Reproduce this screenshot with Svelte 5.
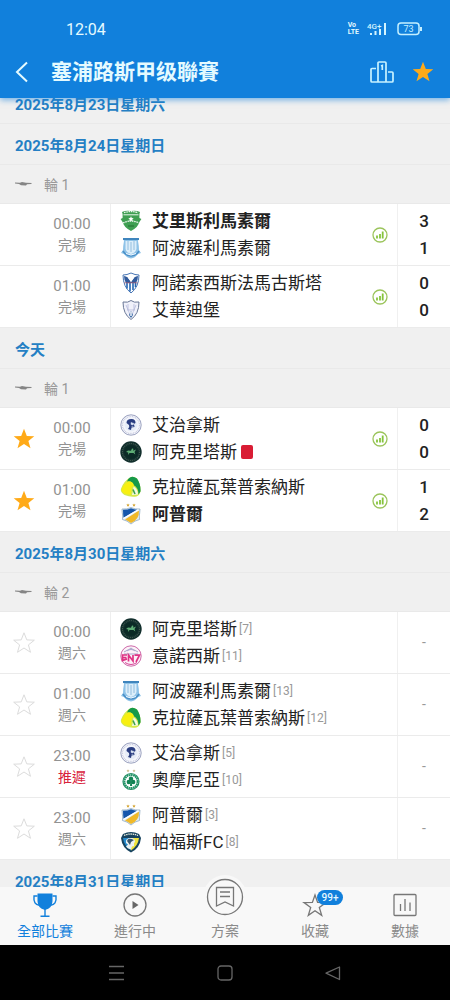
<script>
  const groups = [
    { date: '2025年8月23日星期六', matches: [] },
    {
      date: '2025年8月24日星期日',
      round: '輪 1',
      matches: [
        { time: '00:00', status: '完場', stats: true, teams: [
          { name: '艾里斯利馬素爾', crest: 'aris', score: '3', win: true },
          { name: '阿波羅利馬素爾', crest: 'apollon', score: '1' } ] },
        { time: '01:00', status: '完場', stats: true, teams: [
          { name: '阿諾索西斯法馬古斯塔', crest: 'anorthosis', score: '0' },
          { name: '艾華迪堡', crest: 'ethnikos', score: '0' } ] }
      ]
    },
    {
      date: '今天',
      round: '輪 1',
      matches: [
        { time: '00:00', status: '完場', stats: true, star: 'on', teams: [
          { name: '艾治拿斯', crest: 'achnas', score: '0' },
          { name: '阿克里塔斯', crest: 'akritas', score: '0', red: true } ] },
        { time: '01:00', status: '完場', stats: true, star: 'on', teams: [
          { name: '克拉薩瓦葉普索納斯', crest: 'krasava', score: '1' },
          { name: '阿普爾', crest: 'apoel', score: '2', win: true } ] }
      ]
    },
    {
      date: '2025年8月30日星期六',
      round: '輪 2',
      matches: [
        { time: '00:00', status: '週六', star: 'off', teams: [
          { name: '阿克里塔斯', crest: 'akritas', rank: 7 },
          { name: '意諾西斯', crest: 'enosis', rank: 11 } ] },
        { time: '01:00', status: '週六', star: 'off', teams: [
          { name: '阿波羅利馬素爾', crest: 'apollon', rank: 13 },
          { name: '克拉薩瓦葉普索納斯', crest: 'krasava', rank: 12 } ] },
        { time: '23:00', status: '推遲', late: true, star: 'off', teams: [
          { name: '艾治拿斯', crest: 'achnas', rank: 5 },
          { name: '奧摩尼亞', crest: 'omonia', rank: 10 } ] },
        { time: '23:00', status: '週六', star: 'off', teams: [
          { name: '阿普爾', crest: 'apoel', rank: 3 },
          { name: '帕福斯FC', crest: 'pafos', rank: 8 } ] }
      ]
    },
    { date: '2025年8月31日星期日', matches: [] }
  ];

  let list;
  $effect(() => {
    list.scrollTop = 15;
  });
</script>

{#snippet star(kind)}
  <svg class="star {kind}" viewBox="0 0 24 24" width="24" height="24" aria-hidden="true">
    <path d="M12 1.800l2.800 7.100 7.500.3-5.900 4.700 2.100 7.400-6.500-4.300-6.500 4.300 2.100-7.400L1.700 9.200l7.500-.3z" />
  </svg>
{/snippet}

{#snippet crest(id)}
  <svg class="crest" viewBox="0 0 22 22" width="22" height="22" aria-hidden="true">
    {#if id === 'aris'}
      <path d="M2 2q4-2 9-1 5-1 9 1l-.6 2v4l2 1-2 3q-1 5-8.400 9Q3.600 17 2.600 12l-2-3 2-1V4z" fill="#3f9f52" />
      <path d="M4 2.600q7-2 14 0M3 13q8-4 16 0" stroke="#e9f7eb" stroke-width="1.300" fill="none" stroke-dasharray="1.600 .7" />
      <path d="M3.500 4.800h15" stroke="#eaf7ec" stroke-width="1" />
      <path d="M11 6.300l.8 1.700 1.900.2-1.400 1.300.4 1.900-1.700-1-1.700 1 .4-1.900-1.400-1.300 1.900-.2z" fill="#fff" />
      <path d="M8 16h6" stroke="#2c7d3d" stroke-width="1.500" />
    {:else if id === 'apollon'}
      <path d="M3 1h16l-1 3q1 5 1 9l2 3-3 1q-3 4-7 4.500Q7 21 4 17l-3-1 2-3q0-4 1-9z" fill="#8fc3e8" />
      <path d="M3 1h16v2H3z" fill="#3f85bd" />
      <path d="M5.500 4h11v8q-1 4-5.500 5-4.500-1-5.500-5z" fill="#dceefa" />
      <path d="M8 4v9m6-9v9M11 5v10" stroke="#8bb8dc" stroke-width=".9" />
      <path d="M3 14q3 5 8 5t8-5" stroke="#4a90c8" stroke-width="1.500" fill="none" />
      <path d="M6 16.500q5 3 10 0" stroke="#f4faff" stroke-width="1" fill="none" />
    {:else if id === 'anorthosis'}
      <path d="M11 1q4 2 8 2 0 12-8 18Q3 15 3 3q4 0 8-2z" fill="#fff" stroke="#4775b4" stroke-width="1" />
      <path d="M4 4q4 0 7 6 3-6 7-6 0 4-2 7H6Q4 8 4 4z" fill="#315b9c" />
      <path d="M7 11v5.500M10 11v8.500M13 11v7M15.500 11v4" stroke="#2567b3" stroke-width="1.600" />
      <path d="M8 6q3-4 6 0l-3 4z" fill="#fff" />
      <path d="M4.500 10.800h13" stroke="#a45c72" stroke-width=".8" />
    {:else if id === 'ethnikos'}
      <path d="M11 1.500Q14 4 19 3q0 12-8 17.500Q3 15 3 3q5 1 8-1.500z" fill="#f0f1fa" stroke="#6a7897" stroke-width="1" />
      <path d="M6 6l5 12 5-12M8 5v6m6-6v6M7 11h8" stroke="#b4b9d9" stroke-width=".8" fill="none" />
      <path d="M9 16l2-4 2 4-2 3z" fill="#3969a5" />
      <path d="M10.300 13h1.400v4h-1.400z" fill="#fff" />
    {:else if id === 'achnas'}
      <circle cx="11" cy="11" r="10.200" fill="#f6f7fc" stroke="#8f96b8" stroke-width=".9" />
      <circle cx="11" cy="11" r="8.500" fill="none" stroke="#c6cadf" stroke-width="1.300" stroke-dasharray=".9 .8" />
      <circle cx="11" cy="11" r="6.500" fill="#e7edf8" />
      <path d="M6.500 9q0-4 5-4 4 0 4 4l-1.500 1 .5 3-3 .5-.5 2.500-3-1q2-2 1-4z" fill="#293c80" />
      <path d="M11 8.500l3 1-1 1.500-2-.5zM11.500 12.500h2" fill="#dbe4f4" stroke="#dbe4f4" stroke-width=".5" />
    {:else if id === 'akritas'}
      <circle cx="11" cy="11" r="10.700" fill="#122f2d" />
      <circle cx="11" cy="11" r="8.500" fill="none" stroke="#40594f" stroke-width="1.200" stroke-dasharray="1 .9" />
      <circle cx="11" cy="11" r="6.800" fill="#0b2a26" />
      <path d="M6 11l2-1.500 3 .3 1-2.300 1.300.2-.1 2 2.800-1.200-1.500 2.500.8 2.500-1.800-1.500H9.500L8 14l.3-2.500z" fill="#5fae76" />
    {:else if id === 'krasava'}
      <path d="M10 1.500Q13-.5 17 2.500q4 6 3.500 13-1 4-4 5-6 1-12-1.500-5-3-3.200-7Q4 5 10 1.500z" fill="#d6e94a" />
      <path d="M10 1.500Q13-.5 17 2.500q4 6 3.500 13l-2 3q0-7-5-9.500Q12 4 7 5.500q1-3 3-4z" fill="#16994a" />
      <path d="M8 5.500q-5 3-6.500 8.500.5 4 9 4.800l1-7.300 2.500-2Q13 5 8 5.500z" fill="#f8ef10" />
      <path d="M13.500 10.500q4 2 4.500 8l-6 .5 1-4z" fill="#f5fbe6" />
      <path d="M13 13.500l2 4.500" stroke="#3fa04c" stroke-width="1.600" />
    {:else if id === 'apoel'}
      <path d="M8 .4l.6 1 1.100.1-.8.8.2 1.100-1.100-.5-1.100.5.2-1.100-.8-.8 1.100-.1zM14 .4l.6 1 1.100.1-.8.8.2 1.100-1.100-.5-1.100.5.2-1.100-.8-.8 1.100-.1z" fill="#d7aa3e" />
      <path d="M2 6q5 .5 9-1.500 4 2 9 1.500-.2 4-.7 7l.3 3.500q-5 1-8.600 4.500-3.600-3.500-8.600-4.500L2.700 13Q2.200 10 2 6z" fill="#dfecf5" stroke="#86a4bc" stroke-width=".7" />
      <path d="M3 6.800q5 0 8-1.500 3 1.300 6 1.400l-13.500 8Q3 11 3 6.800z" fill="#1557ac" />
      <path d="M19 7.500q.5 9-8 12.500-4-3-6-3.500z" fill="#f0b929" />
      <path d="M3.500 15.500L18.500 6.800" stroke="#fff" stroke-width="1.300" />
    {:else if id === 'enosis'}
      <circle cx="11" cy="11" r="10.200" fill="#fcf1f8" stroke="#c75aa0" stroke-width=".9" />
      <path d="M4 7q7-5 14 0M7 6l4-3 4 3M4 9h14" stroke="#a9a5ca" stroke-width="1" fill="none" />
      <path d="M7 10H2.500v5.500L7 14M3 12.700h3.500M8.500 16.500V10l4.500 6V10m1.500.2h5L16 17" stroke="#df3284" stroke-width="1.700" fill="none" />
      <path d="M5 17.500q6 4 12 0" stroke="#d94898" stroke-width="1" fill="none" />
    {:else if id === 'omonia'}
      <path d="M8 .3l.5 1h1l-.7.8.2 1-1-.5-1 .5.200-1-.7-.8h1zM14 .3l.5 1h1l-.7.8.2 1-1-.5-1 .5.200-1-.7-.8h1z" fill="#cab98a" />
      <circle cx="11" cy="12.500" r="8" fill="#fff" stroke="#248e65" stroke-width="1.200" />
      <circle cx="11" cy="12.500" r="6.600" fill="none" stroke="#249568" stroke-width="2" stroke-dasharray="1.800 .4" />
      <g fill="#128253"><circle cx="11" cy="9.800" r="2.200" /><circle cx="8.800" cy="13" r="2.200" /><circle cx="13.200" cy="13" r="2.200" /><path d="M10.400 12h1.200l.6 5H10z" /></g>
    {:else}
      <path d="M3 3q8-4 16 0l2 4q-1 10-10 14.500Q2 17 1 7z" fill="#17435f" />
      <path d="M3 7q1 8 8 12.500V7z" fill="#248acd" />
      <path d="M11 7h8q-1 8-8 12.500z" fill="#eee33d" />
      <path d="M6 12q-1-5 5-5 4 0 4 4l-1 1v3l-2 .5-1 3q-4-1-5-3l2-2z" fill="#e9f1f1" />
      <path d="M7 10q1-4 7-1l-3 2-1 3z" fill="#38556a" />
      <path d="M4 4.500q7-3 14 0" stroke="#edf0df" stroke-width="1.300" fill="none" stroke-dasharray="1.500 .7" />
    {/if}
  </svg>
{/snippet}

<div class="screen">
  <header>
    <div class="status">
      <span class="clock">12:04</span>
      <div class="signals">
        <span class="volte">Vo<br />LTE</span>
        <svg viewBox="0 0 22 14" width="22" height="14" aria-label="4G+">
          <text x="0" y="7" class="tiny">4G+</text>
          <path d="M4 11v2M8.500 9v4M13 7v6M18 1v12" stroke="#d3f4ff" stroke-width="2" />
        </svg>
        <svg viewBox="0 0 26 14" width="26" height="14" aria-label="73">
          <rect x="1" y="1" width="21" height="11.500" rx="3" fill="none" stroke="#c4efff" stroke-width="1.500" />
          <path d="M24 5v4" stroke="#c4efff" stroke-width="2" />
          <text x="6.500" y="10" class="charge">73</text>
        </svg>
      </div>
    </div>
    <div class="titlebar">
      <button class="back" aria-label="返回">
        <svg viewBox="0 0 14 22" width="14" height="22"><path d="M12 1.500L2 11l10 9.500" fill="none" stroke="#e4faff" stroke-width="2" /></svg>
      </button>
      <h1>塞浦路斯甲级聯賽</h1>
      <button aria-label="排名">
        <svg viewBox="0 0 26 24" width="26" height="24" fill="none" stroke="#c8f2ff" stroke-width="1.700">
          <path d="M9 22V3q0-1 1-1h6q1 0 1 1v19M7 8.500H3q-1 0-1 1V21q0 1 1 1h20q1 0 1-1v-8q0-1-1-1h-4M12 6l1.300-.5V10" />
        </svg>
      </button>
      <button aria-label="收藏聯賽">{@render star('on')}</button>
    </div>
  </header>

  <main bind:this={list}>
    {#each groups as group}
      <section>
        <h2>{group.date}</h2>
        {#if group.round}
          <h3>
            <svg viewBox="0 0 17 6" width="17" height="6" aria-hidden="true"><path d="M0 1.500l5 .2 2-.7 4 .8 6 .2-1 1-4 .2-1 1.300-5-.2-2-1.400-4-.4z" fill="#858585" /></svg>
            {group.round}
          </h3>
        {/if}
        {#each group.matches as match}
          <article>
            {#if match.star}
              <button class="fav" aria-label="關注">{@render star(match.star)}</button>
            {:else}
              <span></span>
            {/if}
            <div class="when">
              <time>{match.time}</time>
              <span class:late={match.late}>{match.status}</span>
            </div>
            <div class="teams">
              {#each match.teams as team}
                <div class="team">
                  {@render crest(team.crest)}
                  <span class="name" class:win={team.win}>{team.name}</span>
                  {#if team.rank}<span class="rank">[{team.rank}]</span>{/if}
                  {#if team.red}<i class="red"></i>{/if}
                </div>
              {/each}
            </div>
            <div class="stats">
              {#if match.stats}
                <svg viewBox="0 0 16 16" width="16" height="16" aria-hidden="true">
                  <circle cx="8" cy="8" r="7" fill="none" stroke="#9bc45b" stroke-width="1.300" />
                  <path d="M5 8.500v3M8 7v4.500M10.700 4.500v7" stroke="#86c43c" stroke-width="1.800" />
                </svg>
              {/if}
            </div>
            <div class="score">
              {#if match.stats}
                {#each match.teams as team}<b>{team.score}</b>{/each}
              {:else}
                <span>-</span>
              {/if}
            </div>
          </article>
        {/each}
      </section>
    {/each}
  </main>

  <nav class="tabs">
    <button class="active">
      <svg viewBox="0 0 26 26" width="26" height="26">
        <path d="M5.500 1.500h15V9q0 7-7.500 9-7.500-2-7.500-9z" fill="#1180dc" />
        <path d="M5.500 4H2q-1 9 6 9.500M20.500 4H24q1 9-6 9.500M13 17v7M8.500 24.300h9" fill="none" stroke="#1180dc" stroke-width="1.400" />
      </svg>
      <span>全部比賽</span>
    </button>
    <button>
      <svg viewBox="0 0 26 26" width="26" height="26">
        <circle cx="13" cy="13" r="11" fill="none" stroke="#777" stroke-width="1.300" />
        <path d="M10.500 9l6 4-6 4z" fill="#666" />
      </svg>
      <span>進行中</span>
    </button>
    <button class="plan">
      <svg viewBox="0 0 44 44" width="44" height="44">
        <circle cx="22" cy="22" r="22" fill="#f8f8f8" />
        <g fill="none" stroke="#777" stroke-width="1.300"><circle cx="22" cy="22" r="17.500" /><path d="M13.500 12.500h17v18.500L22 27l-8.500 4zM17 17h10M17 21.500h10" /></g>
      </svg>
      <span>方案</span>
    </button>
    <button>
      <span class="badged">
        <svg viewBox="0 0 26 26" width="26" height="26"><path d="M13 3l2.600 7.400 8.400.2-6.700 4.800 2.400 8-6.700-4.700-6.700 4.700 2.400-8L2 10.600l8.400-.2z" fill="none" stroke="#777" stroke-width="1.300" /></svg>
        <em>99+</em>
      </span>
      <span>收藏</span>
    </button>
    <button>
      <svg viewBox="0 0 26 26" width="26" height="26" fill="none" stroke="#777" stroke-width="1.300">
        <rect x="2" y="2.500" width="22" height="21" rx="1" /><path d="M8.500 12v7M13 7v12M18 10.500V19" />
      </svg>
      <span>數據</span>
    </button>
  </nav>

  <nav class="system">
    <button aria-label="選單"><svg viewBox="0 0 18 18" width="18" height="18"><path d="M1 2.500h15M1 9h15M1 15.500h15" /></svg></button>
    <button aria-label="主畫面"><svg viewBox="0 0 18 18" width="18" height="18"><rect x="2" y="2" width="14" height="14" rx="3" /></svg></button>
    <button aria-label="返回上頁"><svg viewBox="0 0 18 18" width="18" height="18"><path d="M15.500 3v12.500L2 9.200z" stroke-linejoin="round" /></svg></button>
  </nav>
</div>

<style>
  :global(body) { margin: 0; }
  .screen {
    display: flex;
    flex-direction: column;
    height: 100vh;
    overflow: hidden;
    background: #f0f0f0;
    color: #222;
    font-family: Roboto, "Noto Sans CJK TC", sans-serif;
  }
  button {
    display: flex;
    align-items: center;
    justify-content: center;
    padding: 0;
    border: 0;
    background: none;
    color: inherit;
    font: inherit;
  }
  svg { display: block; flex: none; }
  h1, h2, h3 { margin: 0; }

  header {
    position: relative;
    z-index: 1;
    padding-top: 16px;
    background: #1180dc;
    box-shadow: 0 2px 6px #1180dc90;
    color: #e4faff;
  }
  .status {
    display: flex;
    align-items: center;
    justify-content: space-between;
    height: 26px;
    padding: 0 27px 0 66px;
  }
  .clock { font-size: 16px; }
  .signals { display: flex; align-items: center; gap: 8px; }
  .volte { font-size: 7px; line-height: 7px; font-weight: 700; }
  .tiny { font-size: 8px; font-weight: 500; fill: #d3f4ff; }
  .charge { font-size: 9px; fill: #c4efff; }
  .titlebar {
    display: flex;
    align-items: center;
    gap: 16px;
    height: 56px;
    padding: 4px 15px 0;
    box-sizing: border-box;
  }
  .back { width: 20px; justify-content: flex-start; }
  h1 { flex: 1; font-size: 21px; line-height: 30px; font-weight: 700; white-space: nowrap; }

  main {
    flex: 1;
    min-height: 0;
    overflow-y: auto;
    scrollbar-width: none;
  }
  h2, h3 {
    display: flex;
    align-items: center;
    box-sizing: border-box;
    padding: 0 15px;
    border-bottom: 1px solid #e9e9e9;
  }
  h2 { height: 41px; color: #247fc4; font-size: 15px; font-weight: 700; }
  h3 { height: 39px; gap: 12px; color: #999; font-size: 14px; font-weight: 400; }

  article {
    display: grid;
    grid-template-columns: 48px 63px 1fr 34px 53px;
    height: 62px;
    box-sizing: border-box;
    border-bottom: 1px solid #ebebeb;
    background: #fff;
  }
  .star.on { fill: #ffaa18; }
  .star.off { fill: none; stroke: #dcdcdc; stroke-width: 1; }
  .when {
    display: flex;
    flex-direction: column;
    justify-content: center;
    align-items: center;
    padding-right: 14px;
    border-right: 1px solid #eee;
    color: #929292;
    font-size: 14px;
    line-height: 21px;
  }
  time { font-size: 15px; }
  .late { color: #d8213b; }
  .teams { display: flex; flex-direction: column; justify-content: center; padding-left: 9px; }
  .team { display: flex; align-items: center; height: 27px; white-space: nowrap; }
  .name { padding-left: 10px; font-size: 17px; line-height: 27px; }
  .win { font-weight: 700; }
  .rank { padding-left: 2px; color: #999; font-size: 12px; }
  .red { width: 12px; height: 14px; margin-left: 4px; border-radius: 2px; background: #d91c34; }
  .stats { display: flex; align-items: center; justify-content: center; }
  .score {
    display: flex;
    flex-direction: column;
    align-items: center;
    justify-content: center;
    border-left: 1px solid #f0f0f0;
    font-size: 17px;
    line-height: 27px;
  }
  .score b { font-weight: 500; }
  .score span { color: #999; font-size: 14px; }

  .tabs {
    position: relative;
    display: grid;
    grid-template: 58px / repeat(5, 1fr);
    background: #f8f8f8;
    color: #8a8a8a;
    font-size: 14px;
    line-height: 20px;
  }
  .tabs button { flex-direction: column; justify-content: flex-end; gap: 3px; padding-bottom: 4px; }
  .tabs .active { color: #1180dc; }
  .tabs .plan { gap: 2px; }
  .badged { position: relative; }
  em {
    position: absolute;
    top: -2px;
    left: 15px;
    width: 26px;
    border-radius: 8px;
    background: #1180dc;
    color: #e6f8ff;
    font-size: 10px;
    font-style: normal;
    font-weight: 500;
    line-height: 15px;
    text-align: center;
  }
  .system {
    display: flex;
    justify-content: center;
    gap: 90px;
    height: 55px;
    background: #000;
  }
  .system svg { fill: none; stroke: #666; stroke-width: 1.300; }
</style>
